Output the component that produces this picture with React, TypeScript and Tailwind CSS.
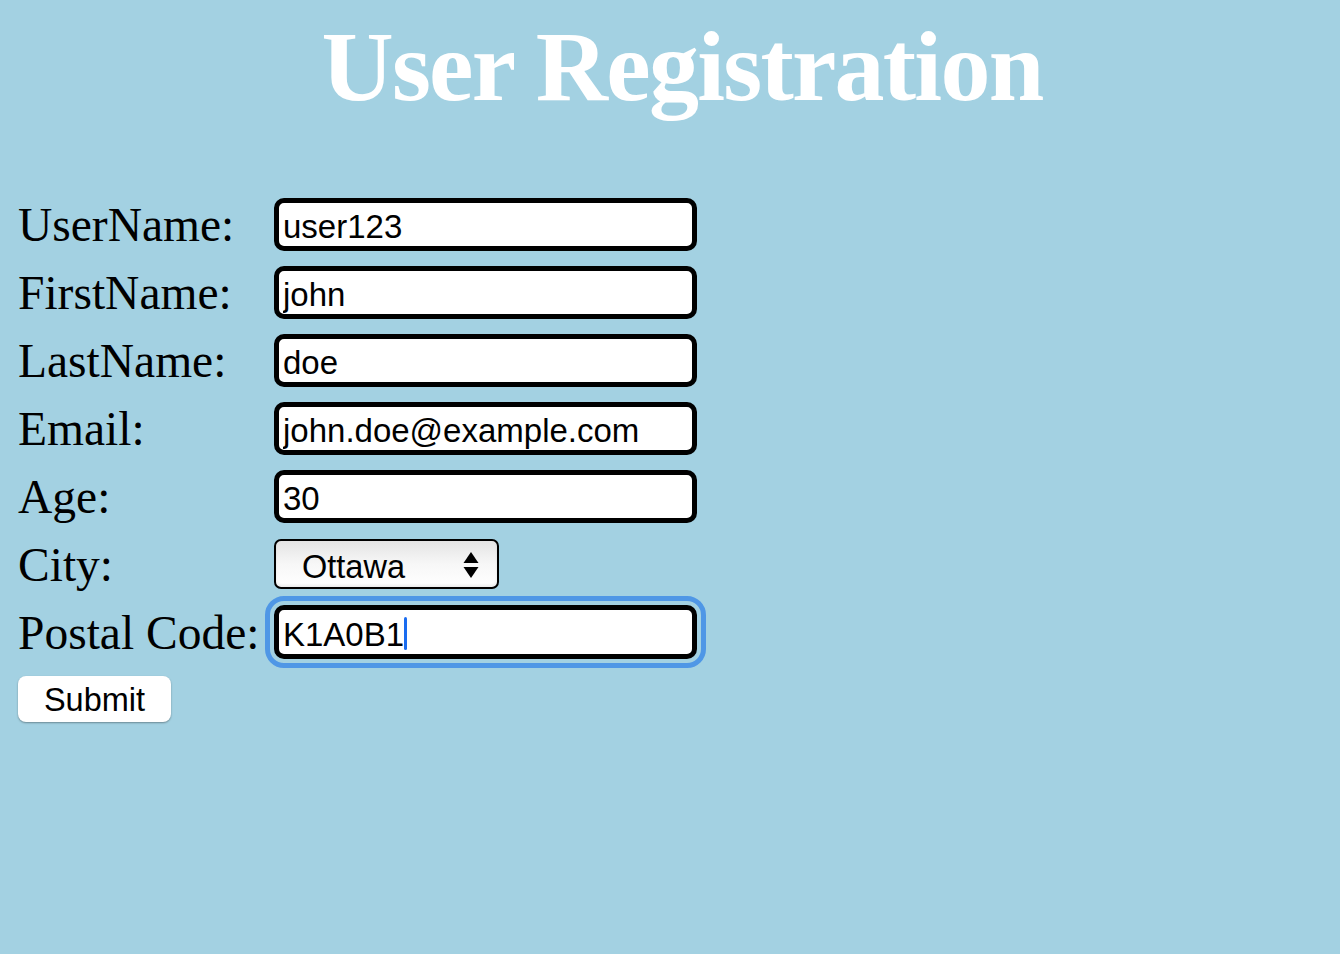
import { useState } from "react";

const fields = [
  { label: "UserName:", name: "username", value: "user123" },
  { label: "FirstName:", name: "firstname", value: "john" },
  { label: "LastName:", name: "lastname", value: "doe" },
  { label: "Email:", name: "email", value: "john.doe@example.com" },
  { label: "Age:", name: "age", value: "30" },
];

function App() {
  const [city, setCity] = useState("Ottawa");
  return (
    <div className="min-h-screen bg-[#a3d1e2] font-['Liberation_Serif',serif] text-black">
      <h1 className="pt-[17px] pl-[24px] text-center text-[100px] leading-[100px] font-bold tracking-[-1.75px] text-white">
        User Registration
      </h1>
      <form className="mt-[73px] pl-[18px]" onSubmit={(e) => e.preventDefault()}>
        {fields.map((f) => (
          <div key={f.name} className="flex h-[68px] items-center">
            <label className="w-[256px] pt-[3px] text-[47.5px] leading-none">{f.label}</label>
            <input
              type="text"
              name={f.name}
              defaultValue={f.value}
              className="h-[53px] w-[423px] rounded-[10px] border-[5px] border-black bg-white px-[4px] pt-[6px] font-['Liberation_Sans',Arial,sans-serif] text-[33px] text-black outline-none"
            />
          </div>
        ))}
        <div className="flex h-[68px] items-center">
          <label className="w-[256px] pt-[3px] text-[47.5px] leading-none">City:</label>
          <div className="relative">
            <select
              name="city"
              value={city}
              onChange={(e) => setCity(e.target.value)}
              className="h-[50px] w-[225px] appearance-none rounded-[7px] border-2 border-black bg-gradient-to-b from-[#e4e4e4] via-[#f7f7f7] to-white pt-[2px] pl-[26px] font-['Liberation_Sans',Arial,sans-serif] text-[32.5px] text-black shadow-[inset_0_-2px_3px_rgba(0,0,0,0.08)] outline-none"
            >
              <option>Ottawa</option>
              <option>Toronto</option>
              <option>Montreal</option>
              <option>Vancouver</option>
            </select>
            <svg
              className="pointer-events-none absolute top-[12px] left-[188px]"
              width="18"
              height="28"
              viewBox="0 0 18 28"
            >
              <path d="M9 1 L16.5 12 L1.5 12 Z" fill="black" />
              <path d="M1.5 16 L16.5 16 L9 27 Z" fill="black" />
            </svg>
          </div>
        </div>
        <div className="flex h-[68px] items-center">
          <label className="w-[256px] pt-[3px] text-[47.5px] leading-none">Postal Code:</label>
          <div className="relative">
            <input
              type="text"
              name="postal"
              defaultValue="K1A0B1"
              className="h-[54px] w-[423px] rounded-[10px] border-[5px] border-black bg-white px-[4px] pt-[6px] font-['Liberation_Sans',Arial,sans-serif] text-[33px] text-black caret-transparent outline-[5px] outline-offset-[4px] outline-[#4f97e6] outline-solid"
            />
            <span className="pointer-events-none absolute top-[12px] left-[130px] h-[33px] w-[3px] rounded-sm bg-[#1a6cf0]" />
          </div>
        </div>
        <button
          type="submit"
          className="mt-[10px] h-[46px] w-[153px] rounded-[8px] bg-white font-['Liberation_Sans',Arial,sans-serif] text-[32.5px] text-black shadow-[0_1px_2px_rgba(0,0,0,0.35)]"
        >
          Submit
        </button>
      </form>
    </div>
  );
}

export default App;
